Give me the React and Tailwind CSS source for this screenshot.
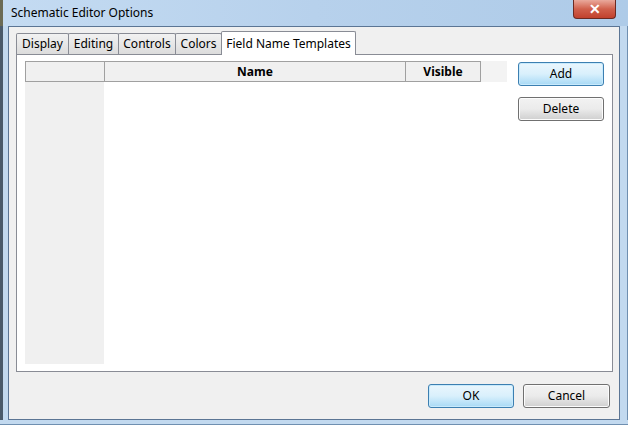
import React from 'react'

const font = { fontFamily: '"Noto Sans", "Open Sans", sans-serif' }

function Tab({ label, active, width }) {
  if (active) {
    return (
      <div className={`relative z-10 -mb-px h-[24px] ${width} flex items-center justify-center bg-white border border-[#898c95] border-b-0 rounded-t-[2px] text-[12px] text-black`}>
        {label}
      </div>
    )
  }
  return (
    <div className={`mt-[2px] h-[21px] ${width} -mr-px flex items-center justify-center border border-[#898c95] border-b-0 rounded-t-[2px] bg-gradient-to-b from-[#f2f2f2] to-[#dcdcdc] text-[12px] text-black`}>
      {label}
    </div>
  )
}

function Button({ label, primary, className = '' }) {
  const look = primary
    ? 'border-[#3c7fb1] from-[#eaf6fd] via-[#d9f0fc] to-[#a7d9f5] shadow-[inset_0_0_0_1px_#c8eafc]'
    : 'border-[#707070] from-[#f2f2f2] via-[#ebebeb] to-[#cfcfcf] shadow-[inset_0_0_0_1px_#fcfcfc]'
  return (
    <div
      className={`h-[24px] w-[86px] flex items-center justify-center rounded-[3px] border bg-gradient-to-b ${look} text-[12px] text-black ${className}`}
    >
      {label}
    </div>
  )
}

export default function App() {
  return (
    <div className="w-[628px] h-[425px] overflow-hidden flex flex-col bg-[#bcd5ee]" style={font}>
      {/* title bar */}
      <div className="h-[26px] flex items-start bg-gradient-to-r from-[#c4dbf2] via-[#b7d1ec] to-[#aecbe8]">
        <div className="w-[3px] self-stretch bg-[#6b6b55]" />
        <div className="flex-1 pl-[8px] pt-[4px] text-[12px] text-black">Schematic Editor Options</div>
        <div className="mr-[12px] w-[43px] h-[19px] flex items-center justify-center rounded-b-[4px] border border-t-0 border-[#6b2a22] bg-gradient-to-b from-[#e9a99c] via-[#d0604c] to-[#c1412d] text-white text-[14px] font-bold leading-none">
          ✕
        </div>
      </div>

      <div className="flex-1 flex">
        {/* left frame */}
        <div className="w-[3px] bg-[#4a5a6a]" />
        <div className="w-[5px] bg-[#c2d9ef]" />

        {/* client */}
        <div className="flex-1 flex flex-col bg-[#f0f0f0] border border-[#5b7594] text-black">
          <div className="pl-[7px] pt-[4px] flex items-end">
            <Tab label="Display" width="w-[53px]" />
            <Tab label="Editing" width="w-[51px]" />
            <Tab label="Controls" width="w-[58px]" />
            <Tab label="Colors" width="w-[47px]" />
            <Tab label="Field Name Templates" width="w-[135px]" active />
          </div>

          {/* tab panel */}
          <div className="ml-[7px] mr-[6px] h-[318px] bg-white border border-[#898c95] flex pt-[6px] pl-[8px] pr-[7px] pb-[7px] gap-[11px]">
            {/* grid */}
            <div className="w-[482px] flex flex-col">
              <div className="h-[21px] flex text-[12px] font-bold">
                <div className="w-[80px] bg-[#f0f0f0] border border-[#a0a0a0]" />
                <div className="w-[301px] flex items-center justify-center bg-[#f0f0f0] border-y border-r border-[#a0a0a0]">Name</div>
                <div className="w-[75px] flex items-center justify-center bg-[#f0f0f0] border-y border-r border-[#a0a0a0]">Visible</div>
                <div className="flex-1 bg-[#f3f3f3]" />
              </div>
              <div className="flex-1 flex">
                <div className="w-[79px] bg-[#f0f0f0]" />
                <div className="flex-1 bg-white" />
              </div>
            </div>

            {/* side buttons */}
            <div className="flex flex-col gap-[11px] pt-[1px]">
              <Button label="Add" primary />
              <Button label="Delete" />
            </div>
          </div>

          {/* bottom buttons */}
          <div className="flex justify-end gap-[9px] pt-[12px] pr-[9px]">
            <Button label="OK" primary className="w-[86px]" />
            <Button label="Cancel" className="w-[87px]" />
          </div>
        </div>

        {/* right frame */}
        <div className="w-[8px] bg-[#c2d9ef] border-r border-[#6f8fb0]" />
      </div>

      <div className="h-[5px] bg-[#c2d9ef] border-b border-[#6f8fb0]" />
    </div>
  )
}
